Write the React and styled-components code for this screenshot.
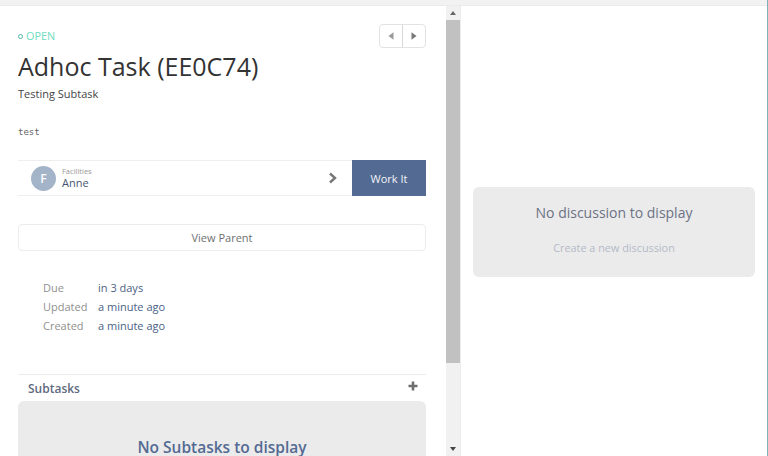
import styled, { createGlobalStyle } from 'styled-components';

const GlobalStyle = createGlobalStyle`
    html, body {
        margin: 0;
        padding: 0;
        background: #fff;
        font-family: "Open Sans", "Liberation Sans", sans-serif;
        overflow: hidden;
    }
`;

const Page = styled.div`
    width: 768px;
    height: 456px;
    display: flex;
    flex-direction: column;
    overflow: hidden;
    box-sizing: border-box;
    border-right: 1px solid #7fb0b5;
`;

const TopBar = styled.div`
    flex: none;
    height: 5px;
    background: #f2f2f2;
    border-bottom: 1px solid #ebebeb;
`;

const Columns = styled.div`
    flex: 1;
    display: flex;
    min-height: 0;
`;

const LeftPane = styled.div`
    flex: none;
    width: 446px;
    box-sizing: border-box;
    padding: 18px 20px 0 18px;
    overflow: hidden;
`;

const Scrollbar = styled.div`
    flex: none;
    width: 14px;
    display: flex;
    flex-direction: column;
    align-items: center;
    background: #f1f1f1;
`;

const ScrollArrow = styled.div`
    flex: none;
    height: 14px;
    width: 100%;
    display: flex;
    align-items: center;
    justify-content: center;
`;

const ScrollThumb = styled.div`
    flex: none;
    width: 100%;
    height: 343px;
    background: #c1c1c1;
`;

const ScrollSpace = styled.div`
    flex: 1;
`;

const RightPane = styled.div`
    flex: 1;
    box-sizing: border-box;
    border-left: 1px solid #ececec;
    padding: 181px 12px 0 12px;
`;

const HeaderRow = styled.div`
    display: flex;
    justify-content: space-between;
    align-items: flex-start;
    height: 25px;
`;

const Status = styled.div`
    display: flex;
    align-items: center;
    gap: 3px;
    margin-top: 5px;
    font-size: 10.8px;
    line-height: 14px;
    color: #70dcc2;
`;

const StatusDot = styled.span`
    width: 5px;
    height: 5px;
    box-sizing: border-box;
    border: 1px solid #4fb9a4;
    border-radius: 50%;
`;

const Pager = styled.div`
    display: flex;
    width: 47px;
    height: 24px;
    box-sizing: border-box;
    border: 1px solid #e2e2e2;
    border-radius: 4px;
`;

const PagerButton = styled.div`
    flex: 1;
    display: flex;
    align-items: center;
    justify-content: center;
    & + & {
        border-left: 1px solid #d8d8d8;
    }
`;

const Title = styled.h1`
    margin: 0;
    font-size: 25px;
    font-weight: 400;
    line-height: 34px;
    color: #333;
    height: 32px;
`;

const Subtitle = styled.div`
    margin-top: 5px;
    font-size: 11px;
    line-height: 16px;
    color: #444;
`;

const Description = styled.div`
    margin-top: 23px;
    font-family: "DejaVu Sans Mono", "Liberation Mono", monospace;
    font-size: 9px;
    line-height: 14px;
    color: #666;
`;

const AssigneeRow = styled.div`
    margin-top: 21px;
    display: flex;
    height: 36px;
`;

const Assignee = styled.div`
    flex: 1;
    display: flex;
    align-items: center;
    box-sizing: border-box;
    padding: 0 14px 0 13px;
    border-top: 1px solid #eeeeee;
    border-bottom: 1px solid #eeeeee;
`;

const Avatar = styled.div`
    width: 25px;
    height: 25px;
    border-radius: 50%;
    background: #a3b4c9;
    color: #fff;
    display: flex;
    align-items: center;
    justify-content: center;
    font-size: 12px;
    font-weight: 600;
`;

const AssigneeText = styled.div`
    flex: 1;
    margin-left: 6px;
    display: flex;
    flex-direction: column;
`;

const AssigneeGroup = styled.div`
    font-size: 7.5px;
    line-height: 10px;
    color: #999;
`;

const AssigneeName = styled.div`
    font-size: 11px;
    line-height: 14px;
    color: #46566e;
`;

const WorkButton = styled.div`
    flex: none;
    width: 74px;
    display: flex;
    align-items: center;
    justify-content: center;
    background: #536a92;
    color: #f2f4f8;
    font-size: 11px;
    font-weight: 500;
`;

const ParentButton = styled.div`
    margin-top: 28px;
    height: 27px;
    box-sizing: border-box;
    padding-bottom: 1px;
    border: 1px solid #ececec;
    border-radius: 4px;
    display: flex;
    align-items: center;
    justify-content: center;
    font-size: 11px;
    color: #6f6f6f;
`;

const Details = styled.div`
    margin-top: 27px;
    padding-left: 25px;
    display: grid;
    grid-template-columns: 55px auto;
    justify-content: start;
    grid-auto-rows: 19px;
    align-items: center;
    font-size: 11px;
`;

const DetailLabel = styled.div`
    color: #8f8f8f;
`;

const DetailValue = styled.div`
    color: #4a6285;
`;

const SectionHeader = styled.div`
    margin-top: 39px;
    height: 27px;
    box-sizing: border-box;
    padding: 0 8px 0 10px;
    border-top: 1px solid #ececec;
    display: flex;
    align-items: center;
    justify-content: space-between;
`;

const SectionTitle = styled.div`
    font-size: 12px;
    font-weight: 600;
    color: #5f6b80;
`;

const AddIcon = styled.svg`
    margin-bottom: 5px;
`;

const EmptyPanel = styled.div`
    height: 55px;
    box-sizing: border-box;
    padding-top: 37px;
    background: #ebebeb;
    border-radius: 6px 6px 0 0;
    text-align: center;
`;

const EmptyTitle = styled.div`
    font-size: 15.5px;
    font-weight: 600;
    line-height: 18px;
    color: #536a92;
`;

const DiscussionPanel = styled.div`
    height: 90px;
    box-sizing: border-box;
    padding-top: 16px;
    background: #ebebeb;
    border-radius: 6px;
    text-align: center;
`;

const DiscussionTitle = styled.div`
    font-size: 14px;
    line-height: 20px;
    color: #6c7285;
`;

const DiscussionLink = styled.div`
    margin-top: 18px;
    font-size: 10.85px;
    line-height: 14px;
    color: #b4bac8;
`;

const Triangle = ({ dir, color = '#777', size = 8 }) => {
    const points = {
        left: '6,1 6,7 2,4',
        right: '2,1 2,7 6,4',
        up: '1,6 7,6 4,2',
        down: '1,2 7,2 4,6',
    };
    return (
        <svg width={size} height={size} viewBox="0 0 8 8">
            <polygon points={points[dir]} fill={color} />
        </svg>
    );
};

const Chevron = () => (
    <svg width="10" height="12" viewBox="0 0 10 12">
        <path d="M2 1.5 L7 6 L2 10.5" fill="none" stroke="#777" strokeWidth="2.4" />
    </svg>
);

const Plus = () => (
    <AddIcon width="10" height="10" viewBox="0 0 10 10">
        <path d="M5 0.5 V9.5 M0.5 5 H9.5" fill="none" stroke="#6e6e6e" strokeWidth="2.6" />
    </AddIcon>
);

export default function App() {
    return (
        <Page>
            <GlobalStyle />
            <TopBar />
            <Columns>
                <LeftPane>
                    <HeaderRow>
                        <Status>
                            <StatusDot />
                            OPEN
                        </Status>
                        <Pager>
                            <PagerButton><Triangle dir="left" color="#999" size={10} /></PagerButton>
                            <PagerButton><Triangle dir="right" color="#777" size={10} /></PagerButton>
                        </Pager>
                    </HeaderRow>
                    <Title>Adhoc Task (EE0C74)</Title>
                    <Subtitle>Testing Subtask</Subtitle>
                    <Description>test</Description>
                    <AssigneeRow>
                        <Assignee>
                            <Avatar>F</Avatar>
                            <AssigneeText>
                                <AssigneeGroup>Facilities</AssigneeGroup>
                                <AssigneeName>Anne</AssigneeName>
                            </AssigneeText>
                            <Chevron />
                        </Assignee>
                        <WorkButton>Work It</WorkButton>
                    </AssigneeRow>
                    <ParentButton>View Parent</ParentButton>
                    <Details>
                        <DetailLabel>Due</DetailLabel>
                        <DetailValue>in 3 days</DetailValue>
                        <DetailLabel>Updated</DetailLabel>
                        <DetailValue>a minute ago</DetailValue>
                        <DetailLabel>Created</DetailLabel>
                        <DetailValue>a minute ago</DetailValue>
                    </Details>
                    <SectionHeader>
                        <SectionTitle>Subtasks</SectionTitle>
                        <Plus />
                    </SectionHeader>
                    <EmptyPanel>
                        <EmptyTitle>No Subtasks to display</EmptyTitle>
                    </EmptyPanel>
                </LeftPane>
                <Scrollbar>
                    <ScrollArrow><Triangle dir="up" color="#666" /></ScrollArrow>
                    <ScrollThumb />
                    <ScrollSpace />
                    <ScrollArrow><Triangle dir="down" color="#444" /></ScrollArrow>
                </Scrollbar>
                <RightPane>
                    <DiscussionPanel>
                        <DiscussionTitle>No discussion to display</DiscussionTitle>
                        <DiscussionLink>Create a new discussion</DiscussionLink>
                    </DiscussionPanel>
                </RightPane>
            </Columns>
        </Page>
    );
}
